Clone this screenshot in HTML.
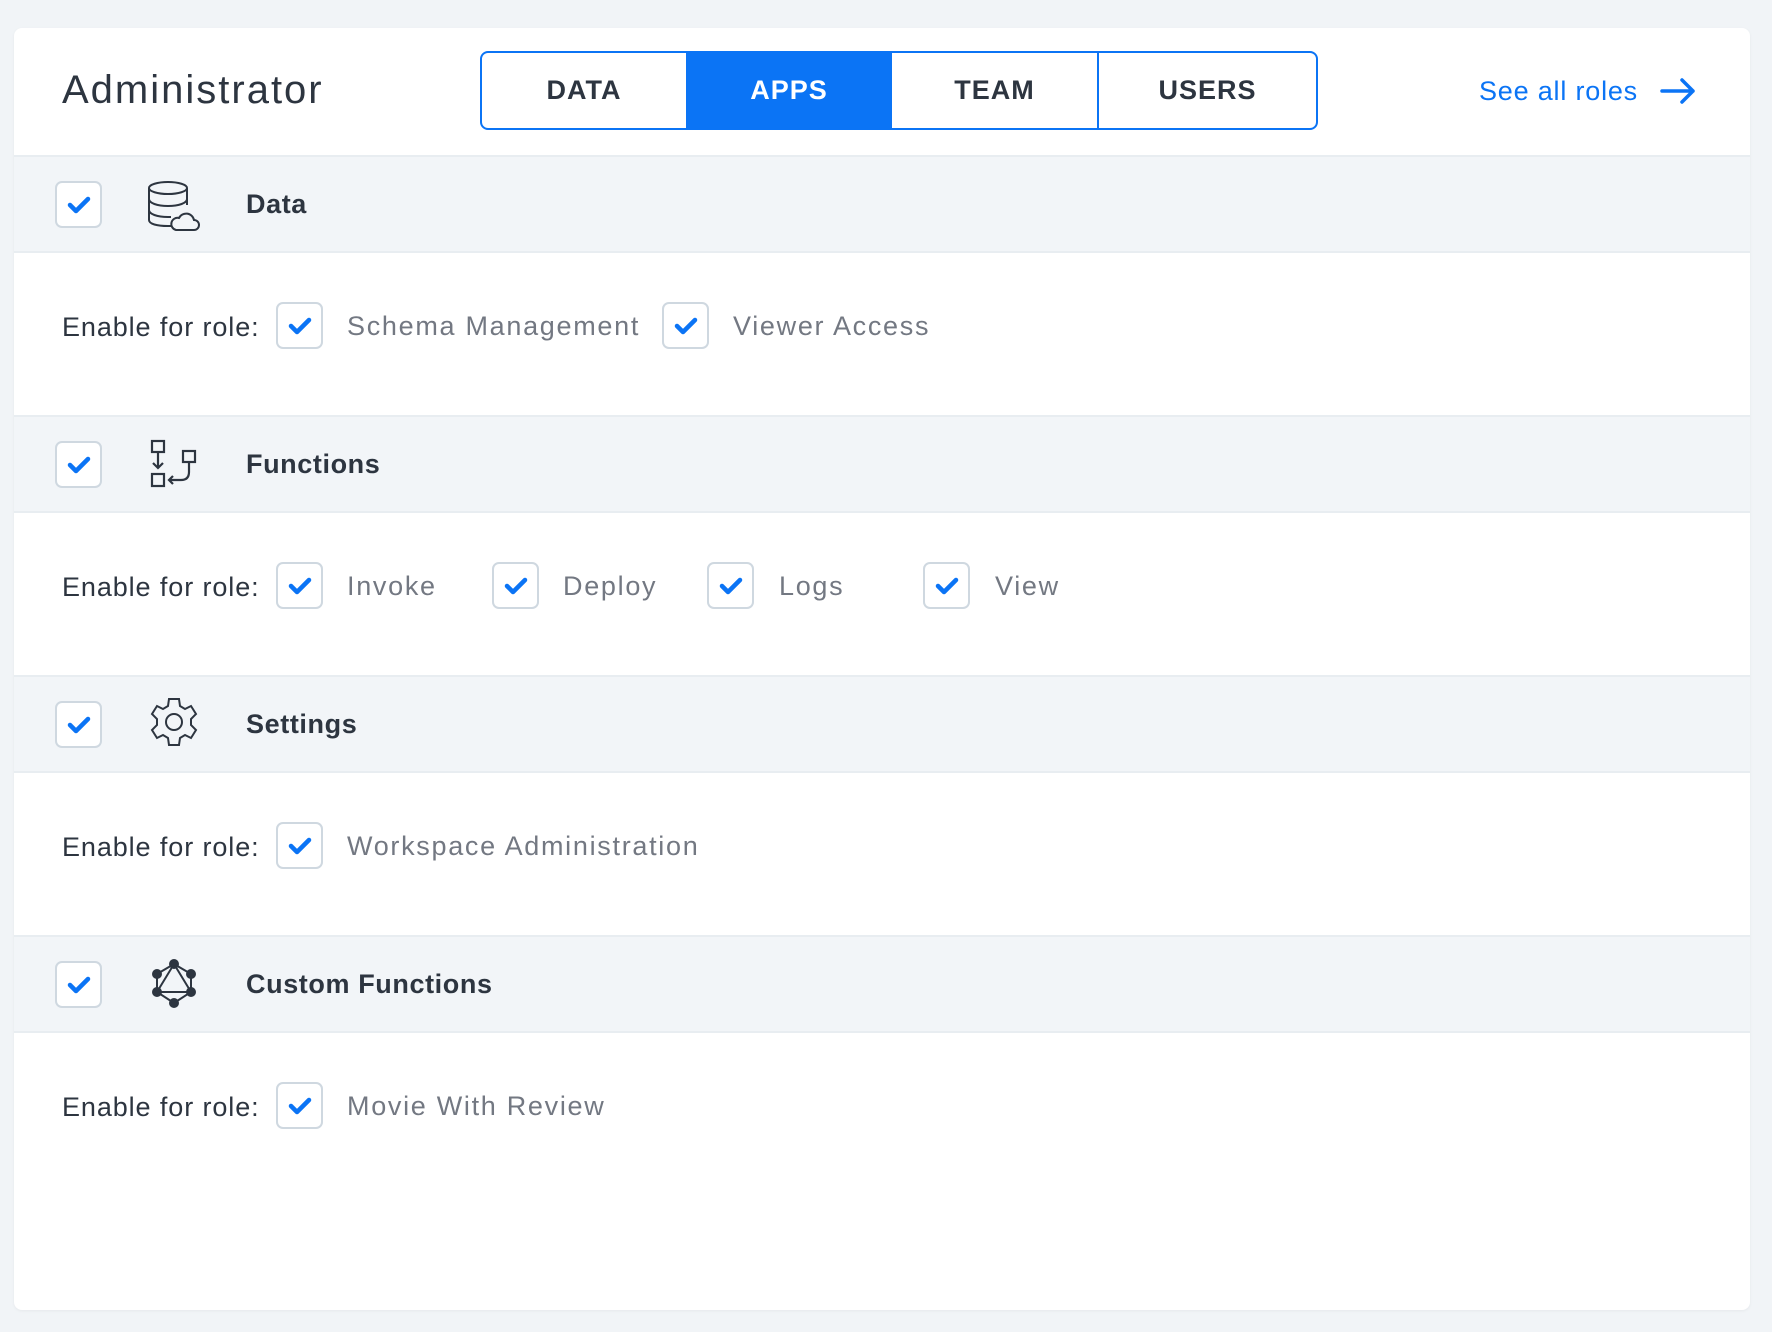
<!DOCTYPE html>
<html><head><meta charset="utf-8"><style>
*{margin:0;padding:0;box-sizing:border-box}
body{width:1772px;height:1332px;background:#f1f4f7;font-family:"Liberation Sans",sans-serif;position:relative;overflow:hidden;color:#2d3540}
.card{position:absolute;left:14px;top:28px;width:1736px;height:1282px;background:#fff;border-radius:8px;box-shadow:0 1px 3px rgba(0,0,0,.05)}
.abs{position:absolute}
.title{left:62px;top:68px;font-size:40px;letter-spacing:2px;color:#2d3540}
.tabs{left:480px;top:51px;width:838px;height:79px;border:2px solid #0b74f5;border-radius:8px;overflow:hidden;display:flex}
.tab{height:100%;display:flex;align-items:center;justify-content:center;font-weight:bold;font-size:27px;letter-spacing:1px;color:#2d3540;border-right:2px solid #0b74f5}
.tab:last-child{border-right:none}
.tab.on{background:#0b74f5;color:#fff}
.see{left:1479px;top:76px;font-size:27px;color:#0b74f5;letter-spacing:.8px}
.sec{position:absolute;left:14px;width:1736px;height:98px;background:#f2f5f8;border-top:2px solid #e8edf1;border-bottom:2px solid #e8edf1}
.cb{position:absolute;width:47px;height:47px;border:2px solid #cfd8e0;border-radius:7px;background:#fff}
.cb svg{position:absolute;left:10px;top:12px}
.st{position:absolute;left:246px;font-weight:bold;font-size:27px;color:#2d3540;letter-spacing:.6px}
.en{position:absolute;left:62px;font-size:27px;color:#2d3540;letter-spacing:.9px}
.lb{position:absolute;font-size:27px;color:#737882;letter-spacing:1.7px}
</style></head><body>
<div class="card"></div>
<div class="abs title">Administrator</div>
<div class="abs tabs">
<div class="tab" style="width:206px">DATA</div>
<div class="tab on" style="width:204px">APPS</div>
<div class="tab" style="width:207px">TEAM</div>
<div class="tab" style="flex:1">USERS</div>
</div>
<div class="abs see">See all roles</div>
<svg class="abs" style="left:1660px;top:78px" width="36" height="26" viewBox="0 0 36 26"><path d="M2 13H33M22 2L33 13L22 24" fill="none" stroke="#0b74f5" stroke-width="3.5" stroke-linecap="round" stroke-linejoin="round"/></svg>

<div class="sec" style="top:155px"></div>
<div class="sec" style="top:415px"></div>
<div class="sec" style="top:675px"></div>
<div class="sec" style="top:935px"></div>

<div class="cb" style="left:55px;top:181px"><svg width="24" height="20" viewBox="0 0 24 20"><path d="M3 10L9 16L21 4" fill="none" stroke="#0b74f5" stroke-width="4.5" stroke-linecap="round" stroke-linejoin="round"/></svg></div>
<div class="cb" style="left:55px;top:441px"><svg width="24" height="20" viewBox="0 0 24 20"><path d="M3 10L9 16L21 4" fill="none" stroke="#0b74f5" stroke-width="4.5" stroke-linecap="round" stroke-linejoin="round"/></svg></div>
<div class="cb" style="left:55px;top:701px"><svg width="24" height="20" viewBox="0 0 24 20"><path d="M3 10L9 16L21 4" fill="none" stroke="#0b74f5" stroke-width="4.5" stroke-linecap="round" stroke-linejoin="round"/></svg></div>
<div class="cb" style="left:55px;top:961px"><svg width="24" height="20" viewBox="0 0 24 20"><path d="M3 10L9 16L21 4" fill="none" stroke="#0b74f5" stroke-width="4.5" stroke-linecap="round" stroke-linejoin="round"/></svg></div>

<svg class="abs" style="left:148px;top:180px" width="52" height="52" viewBox="0 0 52 52" fill="none" stroke="#2d3540" stroke-width="2">
<ellipse cx="20" cy="8" rx="19" ry="6"/>
<path d="M1 8V40C1 44 9 46 20 46H24M39 8V25M1 19C1 23 9 26 20 26S39 23 39 19M1 30C1 34 9 37 20 37H23"/>
<path d="M28 50H46A5 5 0 0 0 46 40A8 8 0 0 0 31 38A6 6 0 0 0 28 50Z"/>
</svg>
<svg class="abs" style="left:148px;top:436px" width="52" height="56" viewBox="0 0 52 56" fill="none" stroke="#2d3540" stroke-width="2.2">
<rect x="4" y="5" width="12" height="11"/><rect x="4" y="38" width="12" height="12"/><rect x="35" y="15" width="12" height="11"/>
<path d="M10 16V32M5 27L10 32L15 27M41 26V36Q41 44 33 44H21M25 40L21 44L25 48"/>
</svg>
<svg class="abs" style="left:148px;top:696px" width="52" height="52" viewBox="0 0 52 52" fill="none" stroke="#2d3540" stroke-width="2">
<path d="M21 3H31L32 10L37 13L43 10L48 18L43 23V29L48 34L43 42L37 39L32 42L31 49H21L20 42L15 39L9 42L4 34L9 29V23L4 18L9 10L15 13L20 10Z"/>
<circle cx="26" cy="26" r="8"/>
</svg>
<svg class="abs" style="left:148px;top:956px" width="52" height="56" viewBox="0 0 52 56" fill="#2d3540" stroke="#2d3540" stroke-width="2">
<path fill="none" d="M26 8L43 18V36L26 47L9 36V18ZM26 8L43 36H9Z"/>
<circle cx="26" cy="8" r="4"/><circle cx="43" cy="18" r="4"/><circle cx="43" cy="36" r="4"/><circle cx="26" cy="47" r="4"/><circle cx="9" cy="36" r="4"/><circle cx="9" cy="18" r="4"/>
</svg>

<div class="st" style="top:189px">Data</div>
<div class="st" style="top:449px">Functions</div>
<div class="st" style="top:709px">Settings</div>
<div class="st" style="top:969px">Custom Functions</div>

<div class="en" style="top:312px">Enable for role:</div>
<div class="cb" style="left:276px;top:302px"><svg width="24" height="20" viewBox="0 0 24 20"><path d="M3 10L9 16L21 4" fill="none" stroke="#0b74f5" stroke-width="4.5" stroke-linecap="round" stroke-linejoin="round"/></svg></div>
<div class="lb" style="left:347px;top:311px">Schema Management</div>
<div class="cb" style="left:662px;top:302px"><svg width="24" height="20" viewBox="0 0 24 20"><path d="M3 10L9 16L21 4" fill="none" stroke="#0b74f5" stroke-width="4.5" stroke-linecap="round" stroke-linejoin="round"/></svg></div>
<div class="lb" style="left:733px;top:311px">Viewer Access</div>

<div class="en" style="top:572px">Enable for role:</div>
<div class="cb" style="left:276px;top:562px"><svg width="24" height="20" viewBox="0 0 24 20"><path d="M3 10L9 16L21 4" fill="none" stroke="#0b74f5" stroke-width="4.5" stroke-linecap="round" stroke-linejoin="round"/></svg></div>
<div class="lb" style="left:347px;top:571px">Invoke</div>
<div class="cb" style="left:492px;top:562px"><svg width="24" height="20" viewBox="0 0 24 20"><path d="M3 10L9 16L21 4" fill="none" stroke="#0b74f5" stroke-width="4.5" stroke-linecap="round" stroke-linejoin="round"/></svg></div>
<div class="lb" style="left:563px;top:571px">Deploy</div>
<div class="cb" style="left:707px;top:562px"><svg width="24" height="20" viewBox="0 0 24 20"><path d="M3 10L9 16L21 4" fill="none" stroke="#0b74f5" stroke-width="4.5" stroke-linecap="round" stroke-linejoin="round"/></svg></div>
<div class="lb" style="left:779px;top:571px">Logs</div>
<div class="cb" style="left:923px;top:562px"><svg width="24" height="20" viewBox="0 0 24 20"><path d="M3 10L9 16L21 4" fill="none" stroke="#0b74f5" stroke-width="4.5" stroke-linecap="round" stroke-linejoin="round"/></svg></div>
<div class="lb" style="left:995px;top:571px">View</div>

<div class="en" style="top:832px">Enable for role:</div>
<div class="cb" style="left:276px;top:822px"><svg width="24" height="20" viewBox="0 0 24 20"><path d="M3 10L9 16L21 4" fill="none" stroke="#0b74f5" stroke-width="4.5" stroke-linecap="round" stroke-linejoin="round"/></svg></div>
<div class="lb" style="left:347px;top:831px">Workspace Administration</div>

<div class="en" style="top:1092px">Enable for role:</div>
<div class="cb" style="left:276px;top:1082px"><svg width="24" height="20" viewBox="0 0 24 20"><path d="M3 10L9 16L21 4" fill="none" stroke="#0b74f5" stroke-width="4.5" stroke-linecap="round" stroke-linejoin="round"/></svg></div>
<div class="lb" style="left:347px;top:1091px">Movie With Review</div>
</body></html>
